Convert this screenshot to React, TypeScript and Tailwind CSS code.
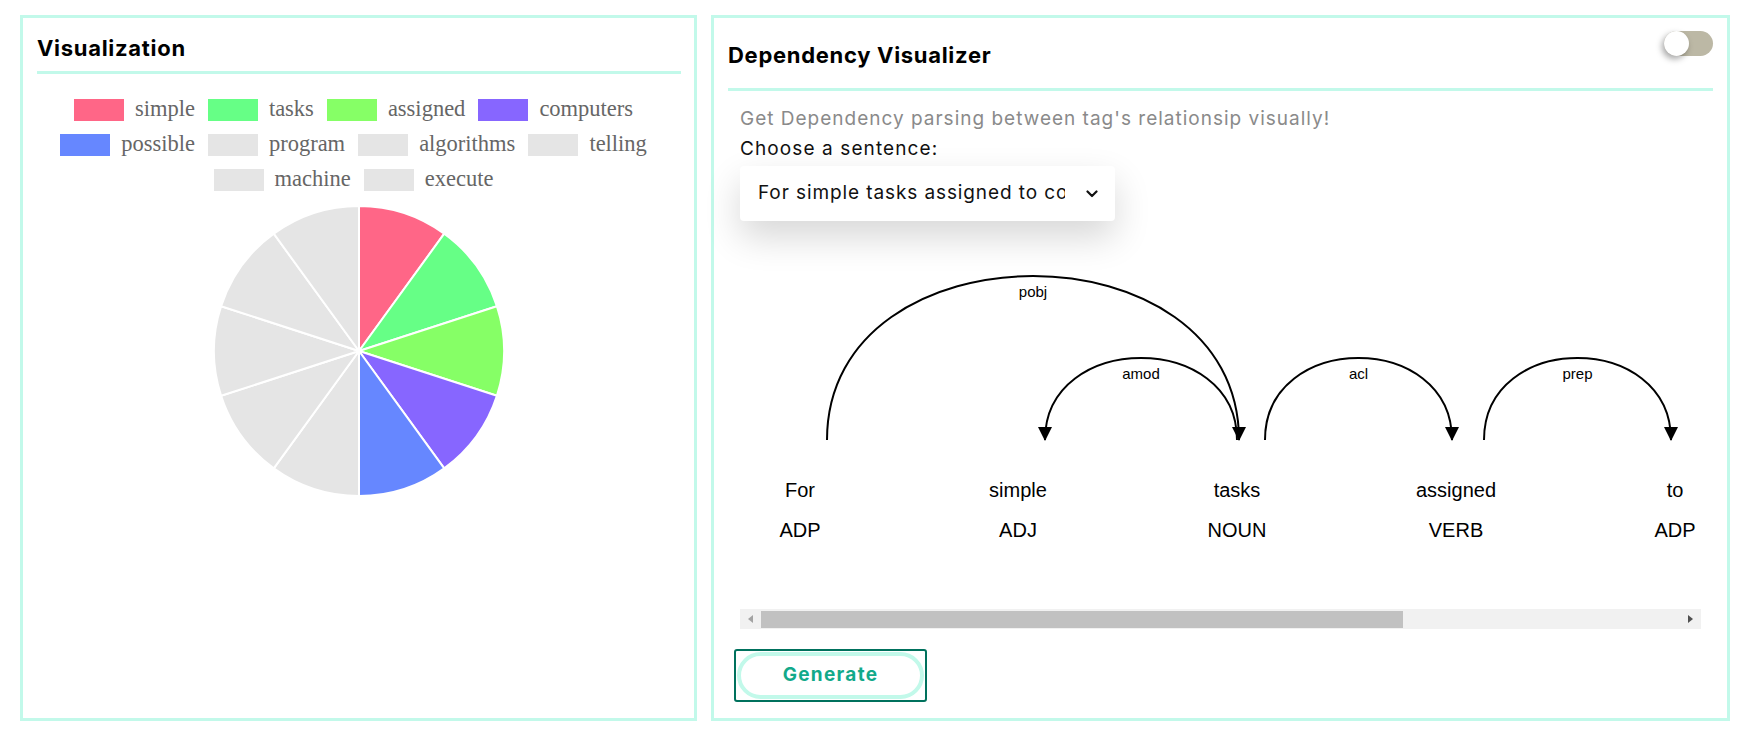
import React from 'react';

type LegendItem = { label: string; swatch: string; fill: string };

const items: LegendItem[] = [
  { label: 'simple', swatch: 'bg-[#ff6687]', fill: '#ff6687' },
  { label: 'tasks', swatch: 'bg-[#66ff86]', fill: '#66ff86' },
  { label: 'assigned', swatch: 'bg-[#86ff66]', fill: '#86ff66' },
  { label: 'computers', swatch: 'bg-[#8766ff]', fill: '#8766ff' },
  { label: 'possible', swatch: 'bg-[#6687ff]', fill: '#6687ff' },
  { label: 'program', swatch: 'bg-[#e5e5e5]', fill: '#e5e5e5' },
  { label: 'algorithms', swatch: 'bg-[#e5e5e5]', fill: '#e5e5e5' },
  { label: 'telling', swatch: 'bg-[#e5e5e5]', fill: '#e5e5e5' },
  { label: 'machine', swatch: 'bg-[#e5e5e5]', fill: '#e5e5e5' },
  { label: 'execute', swatch: 'bg-[#e5e5e5]', fill: '#e5e5e5' },
];

const legendRows = [items.slice(0, 4), items.slice(4, 8), items.slice(8)];

const PieChart: React.FC = () => {
  const cx = 150;
  const cy = 150;
  const r = 145;
  const step = (Math.PI * 2) / items.length;
  return (
    <svg width="300" height="300" viewBox="0 0 300 300">
      {items.map((it, i) => {
        const a0 = -Math.PI / 2 + i * step;
        const a1 = a0 + step;
        const x0 = cx + r * Math.cos(a0);
        const y0 = cy + r * Math.sin(a0);
        const x1 = cx + r * Math.cos(a1);
        const y1 = cy + r * Math.sin(a1);
        return (
          <path
            key={it.label}
            d={`M${cx},${cy} L${x0},${y0} A${r},${r} 0 0 1 ${x1},${y1} Z`}
            fill={it.fill}
            stroke="#ffffff"
            strokeWidth={2}
            strokeLinejoin="round"
          />
        );
      })}
    </svg>
  );
};

const words = [
  { text: 'For', tag: 'ADP', x: 60 },
  { text: 'simple', tag: 'ADJ', x: 278 },
  { text: 'tasks', tag: 'NOUN', x: 497 },
  { text: 'assigned', tag: 'VERB', x: 716 },
  { text: 'to', tag: 'ADP', x: 935 },
];

// arcs: from/to in svg x, arrow at "head", apex = top y of curve
const arcs = [
  { label: 'pobj', from: 87, to: 499, head: 499, apex: 47 },
  { label: 'amod', from: 305, to: 497, head: 305, apex: 129 },
  { label: 'acl', from: 525, to: 712, head: 712, apex: 129 },
  { label: 'prep', from: 744, to: 931, head: 931, apex: 129 },
];

const BASE = 211;

const DependencyGraph: React.FC = () => (
  <svg width="961" height="380" viewBox="0 0 961 380" className="block overflow-visible font-['Liberation_Sans',Arial,sans-serif]">
    {arcs.map((a) => {
      const ctrl = BASE - ((BASE - a.apex) * 4) / 3;
      return (
        <g key={a.label}>
          <path
            d={`M${a.from},${BASE} C${a.from},${ctrl} ${a.to},${ctrl} ${a.to},${BASE}`}
            fill="none"
            stroke="#000"
            strokeWidth={2}
          />
          <text x={(a.from + a.to) / 2} y={a.apex + 21} textAnchor="middle" fontSize="15" fill="#000">
            {a.label}
          </text>
          <path d={`M${a.head},${BASE + 1} L${a.head - 7},${BASE - 13} L${a.head + 7},${BASE - 13} Z`} fill="#000" />
        </g>
      );
    })}
    {words.map((w) => (
      <g key={w.text}>
        <text x={w.x} y={268} textAnchor="middle" fontSize="20" fill="#000">
          {w.text}
        </text>
        <text x={w.x} y={308} textAnchor="middle" fontSize="20" fill="#000">
          {w.tag}
        </text>
      </g>
    ))}
  </svg>
);

const App: React.FC = () => {
  return (
    <div className="w-[1743px] h-[740px] bg-white flex gap-[14px] pl-5 pt-[15px] font-['Inter',sans-serif]">
      {/* Visualization */}
      <section className="w-[677px] h-[706px] border-[3px] border-[#c2f9ea] px-[14px] pr-[13px] flex flex-col">
        <h2 className="pt-[15px] mb-[8px] text-[22px] leading-[30px] font-bold text-black tracking-[0.7px]">Visualization</h2>
        <div className="h-[3px] bg-[#c2f9ea]" />
        <div className="mt-[18px] pr-[11px] flex flex-col font-['Liberation_Serif','Times_New_Roman',serif] text-[22.5px] text-[#666]">
          {legendRows.map((row, ri) => (
            <div key={ri} className="h-[35px] flex items-center justify-center">
              {row.map((it, i) => (
                <div key={it.label} className={`flex items-center ${i > 0 ? 'ml-[13px]' : ''}`}>
                  <span className={`w-[50px] h-[22px] ${it.swatch}`} />
                  <span className="ml-[11px] leading-none">{it.label}</span>
                </div>
              ))}
            </div>
          ))}
        </div>
        <div className="mt-[4px] flex justify-center">
          <PieChart />
        </div>
      </section>

      {/* Dependency Visualizer */}
      <section className="w-[1019px] h-[706px] border-[3px] border-[#c2f9ea] px-[14px] flex flex-col">
        <div className="h-[70px] flex items-start justify-between">
          <h2 className="pt-[22px] text-[22px] leading-[30px] font-bold text-black tracking-[0.7px]">Dependency Visualizer</h2>
          <div className="mt-[13px] w-[49px] h-[25px] rounded-full bg-[#bcb8a5] relative">
            <span className="absolute left-0 top-0 w-[25px] h-[25px] rounded-full bg-white shadow-[-2px_3px_6px_rgba(0,0,0,0.35)]" />
          </div>
        </div>
        <div className="h-[3px] bg-[#c2f9ea]" />
        <div className="pl-[12px] pr-[12px] flex flex-col">
          <p className="mt-[13px] text-[19px] leading-[30px] tracking-[1px] text-[#8a8a8a]">Get Dependency parsing between tag's relationsip visually!</p>
          <p className="text-[19px] leading-[30px] tracking-[1.1px] text-[#111]">Choose a sentence:</p>
          <div className="mt-[2px] w-[375px] h-[55px] rounded-[4px] bg-white shadow-[0_16px_36px_rgba(0,0,0,0.16)] flex items-center pl-[18px] pr-[17px]">
            <span className="w-[307px] overflow-hidden whitespace-nowrap text-[19px] tracking-[0.9px] text-[#111]">For simple tasks assigned to co</span>
            <svg className="ml-auto" width="12" height="8" viewBox="0 0 12 8">
              <polyline points="1.5,1.5 6,6 10.5,1.5" fill="none" stroke="#111" strokeWidth="2.2" strokeLinecap="round" strokeLinejoin="round" />
            </svg>
          </div>
          <div className="mt-[8px] w-[961px] h-[380px] overflow-hidden">
            <DependencyGraph />
          </div>
          {/* horizontal scrollbar */}
          <div className="w-[961px] h-[20px] bg-[#f1f1f1] flex items-center relative">
            <svg className="absolute left-[8px] top-[6px]" width="5" height="8" viewBox="0 0 5 8">
              <path d="M5,0 L0,4 L5,8 Z" fill="#a3a3a3" />
            </svg>
            <div className="ml-[21px] w-[642px] h-[17px] bg-[#c1c1c1]" />
            <svg className="absolute right-[8px] top-[6px]" width="5" height="8" viewBox="0 0 5 8">
              <path d="M0,0 L5,4 L0,8 Z" fill="#505050" />
            </svg>
          </div>
          <button className="-ml-[6px] mt-[20px] w-[193px] h-[53px] border-2 border-[#00715d] rounded-[3px] p-[1px] bg-white">
            <span className="flex w-full h-full items-center justify-center rounded-full border-[4px] border-[#c2f9ea] text-[19px] tracking-[1.3px] font-bold text-[#12a98a]">
              Generate
            </span>
          </button>
        </div>
      </section>
    </div>
  );
};

export default App;
